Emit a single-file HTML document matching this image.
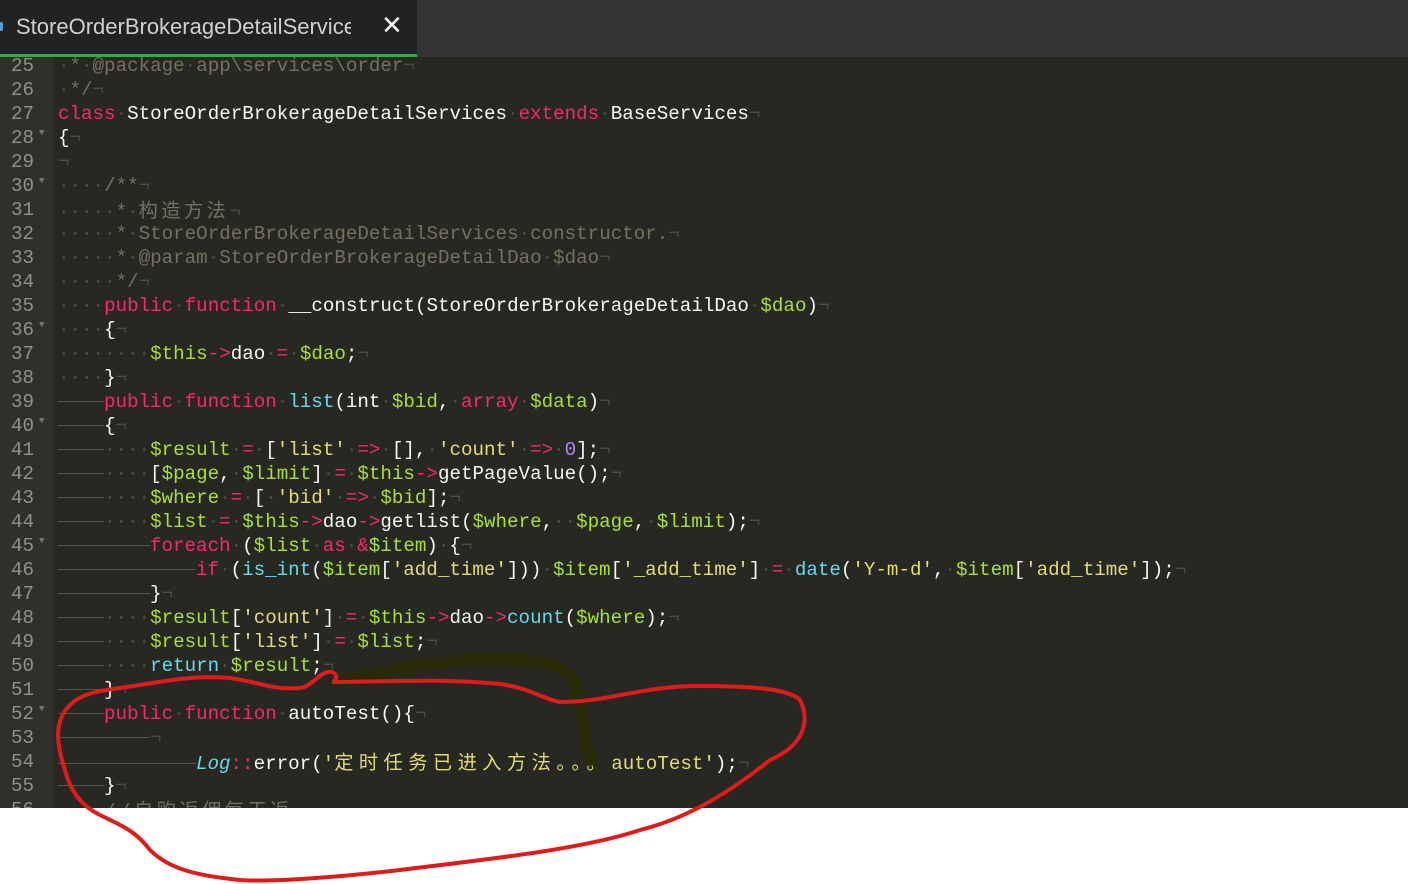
<!DOCTYPE html>
<html><head><meta charset="utf-8"><style>
html,body{margin:0;padding:0;width:1408px;height:884px;background:#fff;overflow:hidden;position:relative}
#tabbar{position:absolute;left:0;top:0;width:1408px;height:57px;background:#333333}
#tab{position:absolute;left:0;top:0;width:417px;height:54px;background:#222222;border-bottom:3px solid #2bb03f}
#tab .t{position:absolute;left:16px;top:14px;width:335px;overflow:hidden;white-space:nowrap;font:22px "Liberation Sans","DejaVu Sans",sans-serif;color:#d0d0d0}
#tab .x{position:absolute;left:381px;top:11px;font:bold 26px "DejaVu Sans",sans-serif;color:#fff}
#tab .ic{position:absolute;left:-4px;top:22px;width:7px;height:9px;background:#5b9bd5;border-radius:2px}
#ed{position:absolute;left:0;top:57px;width:1408px;height:751px;background:#272822;overflow:hidden}
#gut{position:absolute;left:0;top:0;width:54px;height:751px;background:#2f302a}
.l{position:absolute;left:0;height:24px;line-height:24px;white-space:pre;font:19.2px "Liberation Mono","Noto Sans CJK SC",monospace;color:#f8f8f2}
.n{position:absolute;left:0;top:0;width:34px;text-align:right;color:#8f908a}
.f{position:absolute;left:39px;top:1px;color:#777;font-size:9px}
.c{position:absolute;left:58px}
.d,.e{color:#4b4c43}
.t4{display:inline-block;width:46px;height:1px;background:#55564b;vertical-align:middle}
.cm{color:#75715e}.k{color:#f92672}.g{color:#a6e22e}.s{color:#e6db74}.b{color:#66d9ef}.p{color:#ae81ff}.i{color:#66d9ef;font-style:italic}
.cj{letter-spacing:3.5px}
.cj2{letter-spacing:5.5px}
</style></head><body>
<div id="tabbar"><div id="tab"><div class="ic"></div><div class="t">StoreOrderBrokerageDetailServices.php</div><div class="x">✕</div></div></div>
<div id="ed"><div id="gut"></div>
<div class="l" style="top:-2px"><span class="n">25</span><span class="c cm"><span class="d">·</span>*<span class="d">·</span>@package<span class="d">·</span>app\services\order<span class="e">¬</span></span></div>
<div class="l" style="top:22px"><span class="n">26</span><span class="c cm"><span class="d">·</span>*/<span class="e">¬</span></span></div>
<div class="l" style="top:46px"><span class="n">27</span><span class="c"><span class="k">class</span><span class="d">·</span>StoreOrderBrokerageDetailServices<span class="d">·</span><span class="k">extends</span><span class="d">·</span>BaseServices<span class="e">¬</span></span></div>
<div class="l" style="top:70px"><span class="n">28</span><span class="f">▼</span><span class="c">{<span class="e">¬</span></span></div>
<div class="l" style="top:94px"><span class="n">29</span><span class="c"><span class="e">¬</span></span></div>
<div class="l" style="top:118px"><span class="n">30</span><span class="f">▼</span><span class="c cm"><span class="d">····</span>/**<span class="e">¬</span></span></div>
<div class="l" style="top:138px"><span class="n" style="top:4px">31</span><span class="c cm"><span class="d">·····</span>*<span class="d">·</span><span class="cj">构造方法</span><span class="e">¬</span></span></div>
<div class="l" style="top:166px"><span class="n">32</span><span class="c cm"><span class="d">·····</span>*<span class="d">·</span>StoreOrderBrokerageDetailServices<span class="d">·</span>constructor.<span class="e">¬</span></span></div>
<div class="l" style="top:190px"><span class="n">33</span><span class="c cm"><span class="d">·····</span>*<span class="d">·</span>@param<span class="d">·</span>StoreOrderBrokerageDetailDao<span class="d">·</span>$dao<span class="e">¬</span></span></div>
<div class="l" style="top:214px"><span class="n">34</span><span class="c cm"><span class="d">·····</span>*/<span class="e">¬</span></span></div>
<div class="l" style="top:238px"><span class="n">35</span><span class="c"><span class="d">····</span><span class="k">public</span><span class="d">·</span><span class="k">function</span><span class="d">·</span>__construct(StoreOrderBrokerageDetailDao<span class="d">·</span><span class="g">$dao</span>)<span class="e">¬</span></span></div>
<div class="l" style="top:262px"><span class="n">36</span><span class="f">▼</span><span class="c"><span class="d">····</span>{<span class="e">¬</span></span></div>
<div class="l" style="top:286px"><span class="n">37</span><span class="c"><span class="d">········</span><span class="g">$this</span><span class="k">-&gt;</span>dao<span class="d">·</span><span class="k">=</span><span class="d">·</span><span class="g">$dao</span>;<span class="e">¬</span></span></div>
<div class="l" style="top:310px"><span class="n">38</span><span class="c"><span class="d">····</span>}<span class="e">¬</span></span></div>
<div class="l" style="top:334px"><span class="n">39</span><span class="c"><span class="t4"></span><span class="k">public</span><span class="d">·</span><span class="k">function</span><span class="d">·</span><span class="b">list</span>(int<span class="d">·</span><span class="g">$bid</span>,<span class="d">·</span><span class="k">array</span><span class="d">·</span><span class="g">$data</span>)<span class="e">¬</span></span></div>
<div class="l" style="top:358px"><span class="n">40</span><span class="f">▼</span><span class="c"><span class="t4"></span>{<span class="e">¬</span></span></div>
<div class="l" style="top:382px"><span class="n">41</span><span class="c"><span class="t4"></span><span class="d">····</span><span class="g">$result</span><span class="d">·</span><span class="k">=</span><span class="d">·</span>[<span class="s">'list'</span><span class="d">·</span><span class="k">=&gt;</span><span class="d">·</span>[],<span class="d">·</span><span class="s">'count'</span><span class="d">·</span><span class="k">=&gt;</span><span class="d">·</span><span class="p">0</span>];<span class="e">¬</span></span></div>
<div class="l" style="top:406px"><span class="n">42</span><span class="c"><span class="t4"></span><span class="d">····</span>[<span class="g">$page</span>,<span class="d">·</span><span class="g">$limit</span>]<span class="d">·</span><span class="k">=</span><span class="d">·</span><span class="g">$this</span><span class="k">-&gt;</span>getPageValue();<span class="e">¬</span></span></div>
<div class="l" style="top:430px"><span class="n">43</span><span class="c"><span class="t4"></span><span class="d">····</span><span class="g">$where</span><span class="d">·</span><span class="k">=</span><span class="d">·</span>[<span class="d">·</span><span class="s">'bid'</span><span class="d">·</span><span class="k">=&gt;</span><span class="d">·</span><span class="g">$bid</span>];<span class="e">¬</span></span></div>
<div class="l" style="top:454px"><span class="n">44</span><span class="c"><span class="t4"></span><span class="d">····</span><span class="g">$list</span><span class="d">·</span><span class="k">=</span><span class="d">·</span><span class="g">$this</span><span class="k">-&gt;</span>dao<span class="k">-&gt;</span>getlist(<span class="g">$where</span>,<span class="d">··</span><span class="g">$page</span>,<span class="d">·</span><span class="g">$limit</span>);<span class="e">¬</span></span></div>
<div class="l" style="top:478px"><span class="n">45</span><span class="f">▼</span><span class="c"><span class="t4"></span><span class="t4"></span><span class="k">foreach</span><span class="d">·</span>(<span class="g">$list</span><span class="d">·</span><span class="k">as</span><span class="d">·</span><span class="k">&amp;</span><span class="g">$item</span>)<span class="d">·</span>{<span class="e">¬</span></span></div>
<div class="l" style="top:502px"><span class="n">46</span><span class="c"><span class="t4"></span><span class="t4"></span><span class="t4"></span><span class="k">if</span><span class="d">·</span>(<span class="b">is_int</span>(<span class="g">$item</span>[<span class="s">'add_time'</span>]))<span class="d">·</span><span class="g">$item</span>[<span class="s">'_add_time'</span>]<span class="d">·</span><span class="k">=</span><span class="d">·</span><span class="b">date</span>(<span class="s">'Y-m-d'</span>,<span class="d">·</span><span class="g">$item</span>[<span class="s">'add_time'</span>]);<span class="e">¬</span></span></div>
<div class="l" style="top:526px"><span class="n">47</span><span class="c"><span class="t4"></span><span class="t4"></span>}<span class="e">¬</span></span></div>
<div class="l" style="top:550px"><span class="n">48</span><span class="c"><span class="t4"></span><span class="d">····</span><span class="g">$result</span>[<span class="s">'count'</span>]<span class="d">·</span><span class="k">=</span><span class="d">·</span><span class="g">$this</span><span class="k">-&gt;</span>dao<span class="k">-&gt;</span><span class="b">count</span>(<span class="g">$where</span>);<span class="e">¬</span></span></div>
<div class="l" style="top:574px"><span class="n">49</span><span class="c"><span class="t4"></span><span class="d">····</span><span class="g">$result</span>[<span class="s">'list'</span>]<span class="d">·</span><span class="k">=</span><span class="d">·</span><span class="g">$list</span>;<span class="e">¬</span></span></div>
<div class="l" style="top:598px"><span class="n">50</span><span class="c"><span class="t4"></span><span class="d">····</span><span class="b">return</span><span class="d">·</span><span class="g">$result</span>;<span class="e">¬</span></span></div>
<div class="l" style="top:622px"><span class="n">51</span><span class="c"><span class="t4"></span>}<span class="e">¬</span></span></div>
<div class="l" style="top:646px"><span class="n">52</span><span class="f">▼</span><span class="c"><span class="t4"></span><span class="k">public</span><span class="d">·</span><span class="k">function</span><span class="d">·</span>autoTest(){<span class="e">¬</span></span></div>
<div class="l" style="top:670px"><span class="n">53</span><span class="c"><span class="t4"></span><span class="t4"></span><span class="e">¬</span></span></div>
<div class="l" style="top:690px"><span class="n" style="top:4px">54</span><span class="c"><span class="t4"></span><span class="t4"></span><span class="t4"></span><span class="i">Log</span><span class="k">::</span>error(<span class="s">'<span class="cj2">定时任务已进入方法。。。</span>autoTest'</span>);<span class="e">¬</span></span></div>
<div class="l" style="top:718px"><span class="n">55</span><span class="c"><span class="t4"></span>}<span class="e">¬</span></span></div>
<div class="l" style="top:738px"><span class="n" style="top:4px">56</span><span class="c cm"><span class="t4"></span><span class="cj">//自购返佣每天返</span></span></div>
</div>
<svg width="1408" height="884" style="position:absolute;left:0;top:0" xmlns="http://www.w3.org/2000/svg">
<path d="M345 680 C420 665 470 655 520 660 C550 662 565 668 575 680 L590 760" fill="none" stroke="#2a2a05" stroke-width="12" stroke-linecap="round" opacity="0.9"/>
<path d="M332 682 C380 682 440 678 500 684 C530 688 545 700 560 702 C610 702 640 686 700 686 C760 686 790 690 800 700 C810 720 805 745 770 760 C720 800 680 820 640 830 C580 850 480 860 400 870 C330 878 270 882 240 880 C200 876 170 870 150 850 C135 830 120 825 100 815 C80 805 70 790 65 770 C55 740 55 720 70 705 C85 690 110 690 140 685 C170 680 200 675 230 678 C260 682 270 690 300 688 C315 685 320 670 332 672 C340 675 335 682 332 682" fill="none" stroke="#e01b1b" stroke-width="4" stroke-linejoin="round"/>
</svg>
</body></html>
